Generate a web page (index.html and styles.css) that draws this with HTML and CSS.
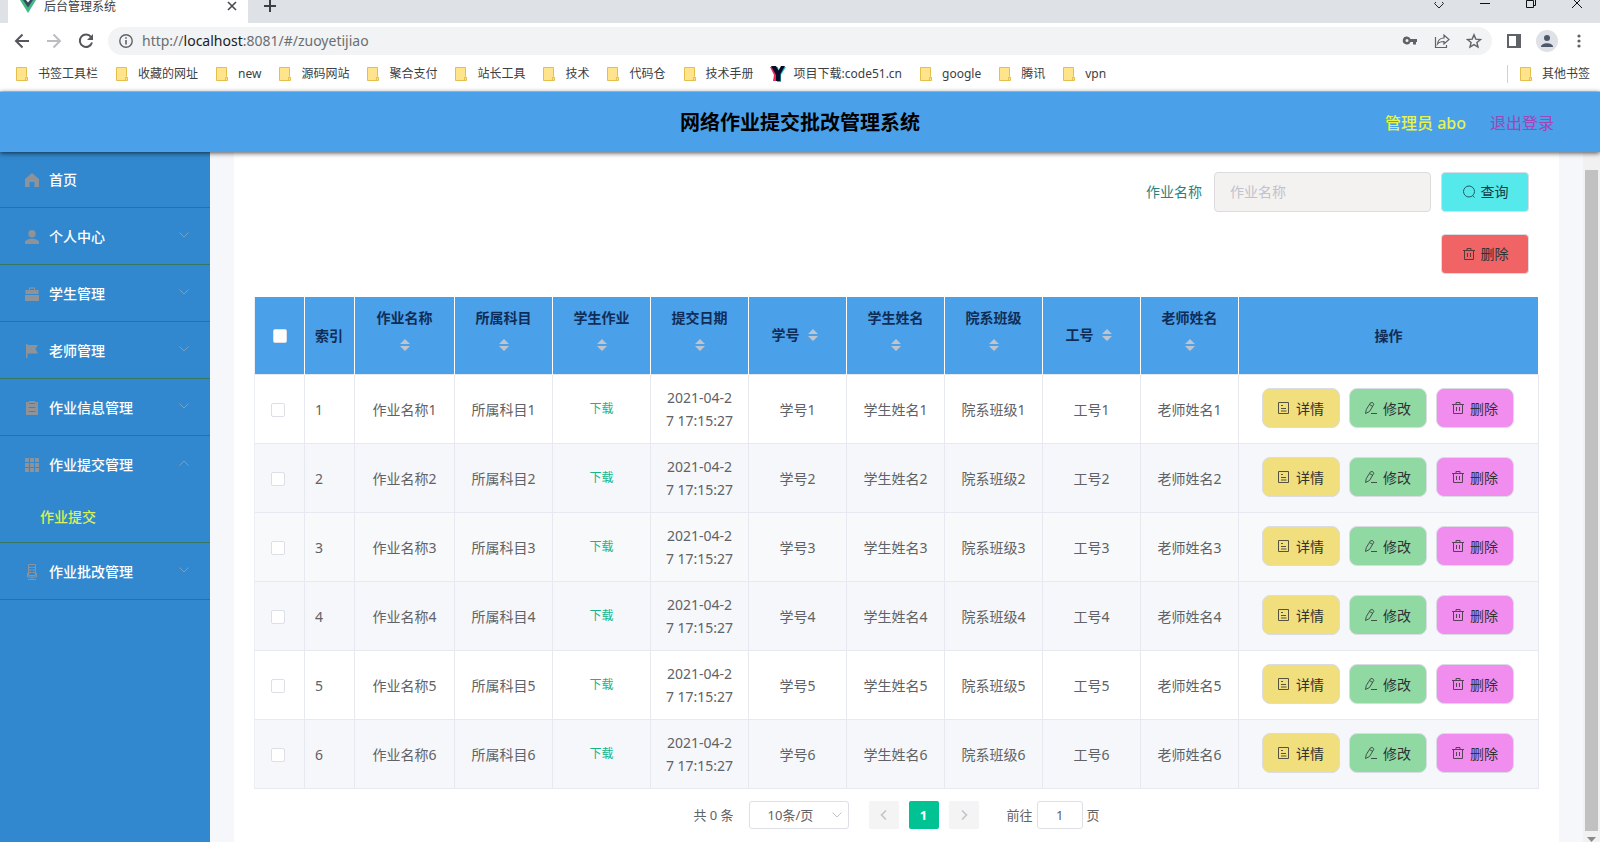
FILE: index.html
```
<!DOCTYPE html>
<html lang="zh-CN">
<head>
<meta charset="utf-8">
<title>后台管理系统</title>
<link rel="stylesheet" href="styles.css">
</head>
<body>
<svg width="0" height="0" class="defs" aria-hidden="true">
  <symbol id="folder" viewBox="0 0 12 14"><path d="M.5.5h10v9l1 1v3H.5z" fill="#ffe48c" stroke="#e3c04c"/><path d="M9.500 13.500v-3h2" fill="none" stroke="#e3c04c"/></symbol>
  <symbol id="down" viewBox="0 0 12 12"><path d="M1.500 3.500 6 8l4.500-4.500" fill="none" stroke="currentColor"/></symbol>
  <symbol id="up" viewBox="0 0 12 12"><path d="M1.500 8.500 6 4l4.500 4.500" fill="none" stroke="currentColor"/></symbol>
  <symbol id="sort" viewBox="0 0 10 12"><path d="M0 5 5 0l5 5zM0 7h10l-5 5z" fill="#c0c4cc"/></symbol>
  <symbol id="doc" viewBox="0 0 14 14"><path d="M1.500 1.500h10v11h-10zM4 4.500h2M4 7.500h5M4 10h5.500" fill="none" stroke="currentColor"/></symbol>
  <symbol id="edit" viewBox="0 0 14 14"><path d="M1.500 12.500 2.300 8.500 6.500 1.800Q9 .5 9.800 3.300L5.500 10.500ZM5.500 3.500l3.300 2M7 12.500h6" fill="none" stroke="currentColor"/></symbol>
  <symbol id="trash" viewBox="0 0 14 14"><path d="M1 3.500h12M2.500 3.500v9h9v-9M5 3V1.500h4V3M5.500 6v4M8.500 6v4" fill="none" stroke="currentColor"/></symbol>
</svg>

<div class="browser">
  <div class="tabs">
    <div class="tab">
      <svg class="vue" width="16" height="14" viewBox="0 0 16 14"><path d="M0 0h16L8 13z" fill="#41b883"/><path d="M3 0h10L8 7.500z" fill="#35495e"/><path d="M6 0h4L8 2.500z" fill="#fff"/></svg>
      <span>后台管理系统</span>
      <button class="plain tab-close" aria-label="关闭标签页"><svg width="10" height="10" viewBox="0 0 10 10"><path d="m1 1 8 8m0-8L1 9" stroke="#45494d" stroke-width="1.600"/></svg></button>
    </div>
    <button class="plain new-tab" aria-label="新标签页"><svg width="12" height="12" viewBox="0 0 12 12"><path d="M6 0v12M0 6h12" stroke="#3c4043" stroke-width="2"/></svg></button>
    <div class="window-buttons">
      <button class="plain" aria-label="搜索标签页"><svg width="12" height="12" viewBox="0 0 12 12"><path d="M3 4 1.500 5.500 6 10l4.500-4.500L9 4" fill="none" stroke="#222"/></svg></button>
      <button class="plain" aria-label="最小化"><svg width="12" height="12" viewBox="0 0 12 12"><path d="M1 5.500h10" stroke="#111"/></svg></button>
      <button class="plain" aria-label="还原"><svg width="12" height="12" viewBox="0 0 12 12"><path d="M1.500 2.500h7v7h-7zM3.500 2V.5h7v7H9" fill="none" stroke="#111"/></svg></button>
      <button class="plain" aria-label="关闭"><svg width="12" height="12" viewBox="0 0 12 12"><path d="m1 0 10 10M11 0 1 10" stroke="#111"/></svg></button>
    </div>
  </div>
  <div class="toolbar">
    <button class="plain" aria-label="后退"><svg width="16" height="16" viewBox="0 0 16 16"><path d="M15 8H2m6.500-6.500L2 8l6.500 6.500" fill="none" stroke="#54585c" stroke-width="2"/></svg></button>
    <button class="plain" aria-label="前进"><svg width="16" height="16" viewBox="0 0 16 16"><path d="M1 8h13M7.500 1.500 14 8l-6.500 6.500" fill="none" stroke="#bbbdc0" stroke-width="2"/></svg></button>
    <button class="plain" aria-label="刷新"><svg width="16" height="16" viewBox="0 0 16 16"><path d="M13 4A6.200 6.200 0 1 0 14 9.500" fill="none" stroke="#54585c" stroke-width="2"/><path d="M15 1v6H9z" fill="#54585c"/></svg></button>
    <div class="address">
      <svg width="14" height="14" viewBox="0 0 14 14"><circle cx="7" cy="7" r="6.200" fill="none" stroke="#5f6368" stroke-width="1.400"/><path d="M7 6v4.500M7 3.300v1.500" stroke="#5f6368" stroke-width="1.600"/></svg>
      <span class="url">http://<b>localhost</b>:8081/#/zuoyetijiao</span>
      <svg width="16" height="16" viewBox="0 0 16 16"><path fill-rule="evenodd" d="M5 3.500a4 4 0 1 0 3.500 5.500H11v2.500h3V9h1V6H8.500A4 4 0 0 0 5 3.500zM5 6a1.500 1.500 0 1 1 0 3 1.500 1.500 0 0 1 0-3z" fill="#5f6368"/></svg>
      <svg width="16" height="16" viewBox="0 0 16 16"><path d="M1.500 4v10.500h11V12M3.500 11c.5-4 3-6 6.500-6V2l5 4.500L10 11V8.500c-3 0-5 .5-6.500 2.500z" fill="none" stroke="#5f6368" stroke-width="1.200"/></svg>
      <svg width="16" height="16" viewBox="0 0 16 16"><path d="m8 1.800 1.800 4.300 4.700.4-3.600 3 1.100 4.600-4-2.500-4 2.500 1.100-4.600-3.600-3 4.700-.4z" fill="none" stroke="#5f6368" stroke-width="1.400"/></svg>
    </div>
    <div class="tools">
      <svg width="16" height="16" viewBox="0 0 16 16"><path d="M2 2h12v12H2z" fill="none" stroke="#5f6368" stroke-width="2"/><path d="M10 2h4v12h-4z" fill="#5f6368"/></svg>
      <svg width="22" height="22" viewBox="0 0 22 22"><circle cx="11" cy="11" r="11" fill="#dee1e6"/><circle cx="11" cy="8" r="3" fill="#4d596b"/><path d="M5 17c0-5 12-5 12 0z" fill="#4d596b"/></svg>
      <svg width="4" height="14" viewBox="0 0 4 14"><g fill="#5f6368"><circle cx="2" cy="2" r="1.600"/><circle cx="2" cy="7" r="1.600"/><circle cx="2" cy="12" r="1.600"/></g></svg>
    </div>
  </div>
  <nav class="bookmarks" aria-label="书签">
    <a href="#"><svg><use href="#folder"/></svg>书签工具栏</a>
    <a href="#"><svg><use href="#folder"/></svg>收藏的网址</a>
    <a href="#"><svg><use href="#folder"/></svg>new</a>
    <a href="#"><svg><use href="#folder"/></svg>源码网站</a>
    <a href="#"><svg><use href="#folder"/></svg>聚合支付</a>
    <a href="#"><svg><use href="#folder"/></svg>站长工具</a>
    <a href="#"><svg><use href="#folder"/></svg>技术</a>
    <a href="#"><svg><use href="#folder"/></svg>代码仓</a>
    <a href="#"><svg><use href="#folder"/></svg>技术手册</a>
    <a href="#" class="site"><svg viewBox="0 0 16 16"><path d="M3 1h5l1 4 3-4h4l-5 8v7H7V9z" fill="#21c5d5"/><path d="M0 1h5l3 5-2 9H3l1-6z" fill="#ed2856"/><path d="M1 0h5l2.500 4.500L11 0h4l-4.500 8v7H6V9z" fill="#080c28"/></svg>项目下载:code51.cn</a>
    <a href="#"><svg><use href="#folder"/></svg>google</a>
    <a href="#"><svg><use href="#folder"/></svg>腾讯</a>
    <a href="#"><svg><use href="#folder"/></svg>vpn</a>
    <a href="#" class="other"><svg><use href="#folder"/></svg>其他书签</a>
  </nav>
</div>

<header class="header">
  <h1>网络作业提交批改管理系统</h1>
  <div class="user"><span>管理员 abo</span><a href="#">退出登录</a></div>
</header>

<div class="body">
  <nav class="side" aria-label="主菜单">
    <ul>
      <li><a href="#"><svg viewBox="0 0 14 14"><path d="M7 0 0 6v8h4.500V9h5v5H14V6z"/></svg>首页</a></li>
      <li><a href="#"><svg viewBox="0 0 14 14"><circle cx="7" cy="3.700" r="3.700"/><path d="M0 14v-1.500c0-5 14-5 14 0V14z"/></svg>个人中心<svg class="arrow"><use href="#down"/></svg></a></li>
      <li><a href="#"><svg viewBox="0 0 14 14"><path d="M4 3V.5h6V3h3.500v4H.5V3zm1-1.500V3h4V1.500zM0 8h14v6H0z" fill-rule="evenodd"/></svg>学生管理<svg class="arrow"><use href="#down"/></svg></a></li>
      <li><a href="#"><svg viewBox="0 0 14 14"><path d="M1 0h1.500v1H13l-2.500 4L13 9.500H2.500V14H1z"/></svg>老师管理<svg class="arrow"><use href="#down"/></svg></a></li>
      <li><a href="#"><svg viewBox="0 0 14 14"><path fill-rule="evenodd" d="M1 1h3V0h6v1h3v13H1zm3 1v1h6V2zM3.500 6v1h7V6zm0 4v1h7v-1z"/></svg>作业信息管理<svg class="arrow"><use href="#down"/></svg></a></li>
      <li><a href="#"><svg viewBox="0 0 14 14"><path d="M0 0h4v4H0zM5 0h4v4H5zM10 0h4v4h-4zM0 5h4v4H0zM5 5h4v4H5zM10 5h4v4h-4zM0 10h4v4H0zM5 10h4v4H5zM10 10h4v4h-4z"/></svg>作业提交管理<svg class="arrow"><use href="#up"/></svg></a>
        <a href="#" class="sub">作业提交</a></li>
      <li><a href="#"><svg viewBox="0 0 14 16" class="tall"><path d="M3.500.5h7v11h-7zM4 3.500h2.500M4 6h2.500M4 8.500h2.500M7.500 3.500H10M7.500 6H10M7.500 8.500H10M2.500 9v4h9V9M7 13v2.500M3 15.500h8" fill="none" stroke="#8d9399"/></svg>作业批改管理<svg class="arrow"><use href="#down"/></svg></a></li>
    </ul>
  </nav>

  <main class="main">
    <form class="search">
      <label for="name">作业名称</label>
      <input id="name" type="text" placeholder="作业名称">
      <button type="button" class="btn query"><svg width="14" height="14" viewBox="0 0 14 14"><circle cx="7" cy="6.500" r="5.500" fill="none" stroke="currentColor"/><path d="m10.500 10.500 2 2" stroke="currentColor"/></svg>查询</button>
    </form>
    <div class="actions"><button type="button" class="btn remove"><svg width="14" height="14"><use href="#trash"/></svg>删除</button></div>

    <table>
      <colgroup><col class="c-small"><col class="c-small"><col class="c-name"><col span="8"><col class="c-ops"></colgroup>
      <thead><tr>
        <th><input type="checkbox" aria-label="全选"></th><th class="left">索引</th>
        <th><span class="sort">作业名称<svg><use href="#sort"/></svg></span></th>
        <th><span class="sort">所属科目<svg><use href="#sort"/></svg></span></th>
        <th><span class="sort">学生作业<svg><use href="#sort"/></svg></span></th>
        <th><span class="sort">提交日期<svg><use href="#sort"/></svg></span></th>
        <th><span class="sort inline">学号<svg><use href="#sort"/></svg></span></th>
        <th><span class="sort">学生姓名<svg><use href="#sort"/></svg></span></th>
        <th><span class="sort">院系班级<svg><use href="#sort"/></svg></span></th>
        <th><span class="sort inline">工号<svg><use href="#sort"/></svg></span></th>
        <th><span class="sort">老师姓名<svg><use href="#sort"/></svg></span></th>
        <th>操作</th>
      </tr></thead>
      <tbody id="rows"></tbody>
    </table>

    <div class="pager">
      <span class="total">共 0 条</span>
      <span class="size"><select aria-label="每页条数"><option>10条/页</option></select><svg><use href="#down"/></svg></span>
      <button type="button" class="page" aria-label="上一页"><svg width="12" height="12" viewBox="0 0 12 12"><path d="M8 1.500 3.500 6 8 10.500" fill="none" stroke="#c0c4cc" stroke-width="1.600"/></svg></button>
      <button type="button" class="page current">1</button>
      <button type="button" class="page" aria-label="下一页"><svg width="12" height="12" viewBox="0 0 12 12"><path d="M4 1.500 8.500 6 4 10.500" fill="none" stroke="#c0c4cc" stroke-width="1.600"/></svg></button>
      <label class="jump">前往<input type="text" value="1">页</label>
    </div>
  </main>
  <div class="scrollbar"><div class="thumb"></div><svg width="9" height="5" viewBox="0 0 9 5"><path d="M0 0h9L4.500 5z" fill="#8a8a8a"/></svg></div>
</div>
<script src="rows.js"></script>
</body>
</html>
```
FILE: styles.css
```
* { box-sizing: border-box; }
html, body { height: 100%; }
body {
  margin: 0;
  display: flex;
  flex-direction: column;
  overflow: hidden;
  font: 14px/20px "Noto Sans", "Noto Sans CJK SC", sans-serif;
  color: #606266;
  background: #fff;
}
a { color: inherit; text-decoration: none; }
button, input, select { font: inherit; color: inherit; }
svg { flex: none; }
.defs { position: absolute; }
.plain { display: flex; padding: 0; border: 0; background: none; }

.browser { flex: none; border-bottom: 1px solid #d5d7da; color: #3c4043; }
.tabs { display: flex; height: 23px; background: #dee1e6; padding-left: 8px; }
.tab {
  display: flex;
  width: 240px;
  padding: 0 11px 0 12px;
  background: #fff;
  font-size: 12px;
  line-height: 14px;
}
.tab span { margin-left: 8px; }
.tab-close { margin: 1px 0 0 auto; }
.new-tab { margin-left: 16px; align-self: flex-start; }
.window-buttons { display: flex; gap: 34px; margin-left: auto; padding-right: 17px; height: 10px; align-items: flex-end; }
.toolbar { display: flex; align-items: center; height: 36px; padding: 0 19px 0 14px; }
.toolbar > .plain { margin-right: 16px; }
.address {
  flex: 1;
  display: flex;
  align-items: center;
  gap: 16px;
  height: 28px;
  padding: 0 10px 0 11px;
  margin-left: -2px;
  border-radius: 14px;
  background: #f1f3f4;
}
.url { flex: 1; margin-left: -7px; color: #6a6e72; }
.url b { font-weight: 400; color: #202124; }
.tools { display: flex; align-items: center; gap: 14px; margin-left: 14px; }
.tools svg:last-child { margin-left: 5px; }
.bookmarks {
  display: flex;
  gap: 18px;
  height: 32px;
  padding: 6px 10px 8px 16px;
  font-size: 12px;
  line-height: 18px;
  white-space: nowrap;
}
.bookmarks a { display: flex; align-items: center; }
.bookmarks svg { width: 12px; height: 14px; margin-right: 10px; }
.bookmarks .site svg { width: 16px; height: 16px; margin: 0 8px 0 -2px; }
.bookmarks .other { margin-left: auto; padding-left: 12px; border-left: 1px solid #cfd1d4; }

.header {
  position: relative;
  z-index: 1;
  flex: none;
  display: grid;
  grid-template-columns: 1fr auto 1fr;
  align-items: center;
  height: 60px;
  padding: 2px 46px 0;
  background: #4aa0e9;
  box-shadow: 0 1px 5px rgba(0, 0, 0, .7);
}
.header h1 { grid-column: 2; margin: 0; font-size: 20px; line-height: 28px; color: #000; }
.user { justify-self: end; display: flex; gap: 24px; font-size: 16px; }
.user span { color: #e6f34c; font-weight: 500; }
.user a { color: #9e47b8; }

.body { flex: 1; min-height: 0; display: flex; overflow: hidden; background: #f6f7fa; }
.side { flex: none; width: 210px; background: #3288ce; color: #fff; font-weight: 500; }
.side ul { margin: 0; padding: 0; list-style: none; }
.side li { border-bottom: 1px solid #34795f; }
.side a { display: flex; align-items: center; height: 56px; padding: 2px 20px 0 25px; }
.side li:first-child a { height: 55px; padding-top: 0; }
.side svg { width: 14px; height: 14px; margin-right: 10px; fill: #8d9399; }
.side .tall { height: 16px; }
.side .arrow { width: 12px; height: 12px; margin: 0 0 4px auto; color: #7ba0bc; }
.side .sub { height: 50px; padding: 0 20px 0 40px; color: #dcf05a; }

.main { flex: 1; min-width: 0; margin: 0 24px; padding: 20px 20px 0; background: #fff; }
.search { display: flex; justify-content: flex-end; align-items: center; padding-right: 10px; }
.search label { margin-right: 12px; color: #2b827c; }
.search input {
  width: 217px;
  height: 40px;
  margin-right: 10px;
  padding: 0 15px 2px;
  border: 1px solid #dcdcdf;
  border-radius: 4px;
  background: #f4f1f1;
}
.search input::placeholder { color: #bfc3cc; }
.btn {
  display: inline-flex;
  align-items: center;
  justify-content: center;
  gap: 5px;
  height: 40px;
  border: 1px solid #d9dde3;
  color: #303133;
  padding: 0;
}
.btn svg { opacity: .8; }
.query, .remove { width: 88px; border-radius: 4px; }
.query { background: #55e9eb; color: #123c45; }
.remove { background: #f06466; }
.actions { display: flex; justify-content: flex-end; padding: 22px 10px 23px 0; }

table {
  width: 100%;
  table-layout: fixed;
  border-collapse: separate;
  border-spacing: 0;
  border-left: 1px solid #ebeef5;
}
.c-small { width: 50px; }
.c-name { width: 100px; }
.c-ops { width: 300px; }
th, td {
  padding: 0 8px;
  text-align: center;
  border-right: 1px solid #e6e9f0;
  border-bottom: 1px solid #e6e9f0;
}
th { height: 78px; background: #4aa0e9; color: #102d57; font-weight: 700; border-right-color: #fff; }
td { height: 69px; line-height: 23px; }
td:last-child { padding: 0 10px 2px 8px; }
tbody tr:nth-child(even) { background: #f5f7fa; }
tbody tr.active { background: #f7f9fb; }
.left { text-align: left; padding-left: 10px; padding-right: 0; }
.sort { display: flex; flex-direction: column; align-items: center; gap: 11px; padding-bottom: 12px; }
.sort svg { width: 10px; height: 12px; }
.sort.inline { flex-direction: row; justify-content: center; gap: 8px; padding: 0 6px 2px 0; }
input[type="checkbox"] {
  appearance: none;
  display: inline-block;
  width: 14px;
  height: 14px;
  margin: 0 4px 2px 0;
  border: 1px solid #dcdfe6;
  border-radius: 2px;
  background: #fff;
  vertical-align: middle;
}
th input[type="checkbox"] { margin: 0 0 2px; }
.download { display: block; padding-bottom: 2px; font-size: 12px; color: #17b58c; }
.ops { display: flex; justify-content: center; gap: 9px; }
.ops .btn { width: 78px; border-radius: 8px; }
.detail { background: #f0df7c; }
.modify { background: #90d9a3; }
.delete { background: #f28df0; }

.pager { display: flex; justify-content: center; align-items: center; margin-top: 12px; font-size: 13px; }
.total { margin-right: 15px; }
.size { position: relative; margin-right: 20px; }
.size select {
  appearance: none;
  width: 100px;
  height: 28px;
  padding: 0 18px;
  border: 1px solid #dcdfe6;
  border-radius: 3px;
  background: #fff;
  display: block;
}
.size svg { position: absolute; right: 6px; top: 8px; width: 12px; height: 12px; color: #c0c4cc; }
.page {
  display: flex;
  align-items: center;
  justify-content: center;
  width: 30px;
  height: 28px;
  margin-right: 10px;
  padding: 0;
  border: 0;
  border-radius: 2px;
  background: #f4f4f5;
}
.current { background: #00c292; color: #fff; font-weight: 700; }
.jump { display: flex; align-items: center; margin-left: 18px; gap: 4px; }
.jump input { width: 46px; height: 28px; border: 1px solid #dcdfe6; border-radius: 3px; text-align: center; padding: 0; }

.scrollbar {
  flex: none;
  width: 17px;
  display: flex;
  flex-direction: column;
  align-items: center;
  padding: 18px 0 0;
  background: #f1f1f1;
}
.thumb { flex: 1; width: 13px; margin-bottom: 6px; background: #c1c1c1; }
```
FILE: rows.js
```
const rows = document.getElementById("rows");
const icon = (name) => `<svg width="14" height="14"><use href="#${name}"/></svg>`;

for (let n = 1; n <= 6; n++) {
  const row = document.createElement("tr");
  if (n === 3) row.className = "active";
  row.innerHTML = `
    <td><input type="checkbox" aria-label="选择第${n}行"></td>
    <td class="left">${n}</td>
    <td>作业名称${n}</td>
    <td>所属科目${n}</td>
    <td><a href="#" class="download">下载</a></td>
    <td>2021-04-2<br>7 17:15:27</td>
    <td>学号${n}</td>
    <td>学生姓名${n}</td>
    <td>院系班级${n}</td>
    <td>工号${n}</td>
    <td>老师姓名${n}</td>
    <td><div class="ops">
      <button type="button" class="btn detail">${icon("doc")}详情</button>
      <button type="button" class="btn modify">${icon("edit")}修改</button>
      <button type="button" class="btn delete">${icon("trash")}删除</button>
    </div></td>`;
  rows.append(row);
}
```
